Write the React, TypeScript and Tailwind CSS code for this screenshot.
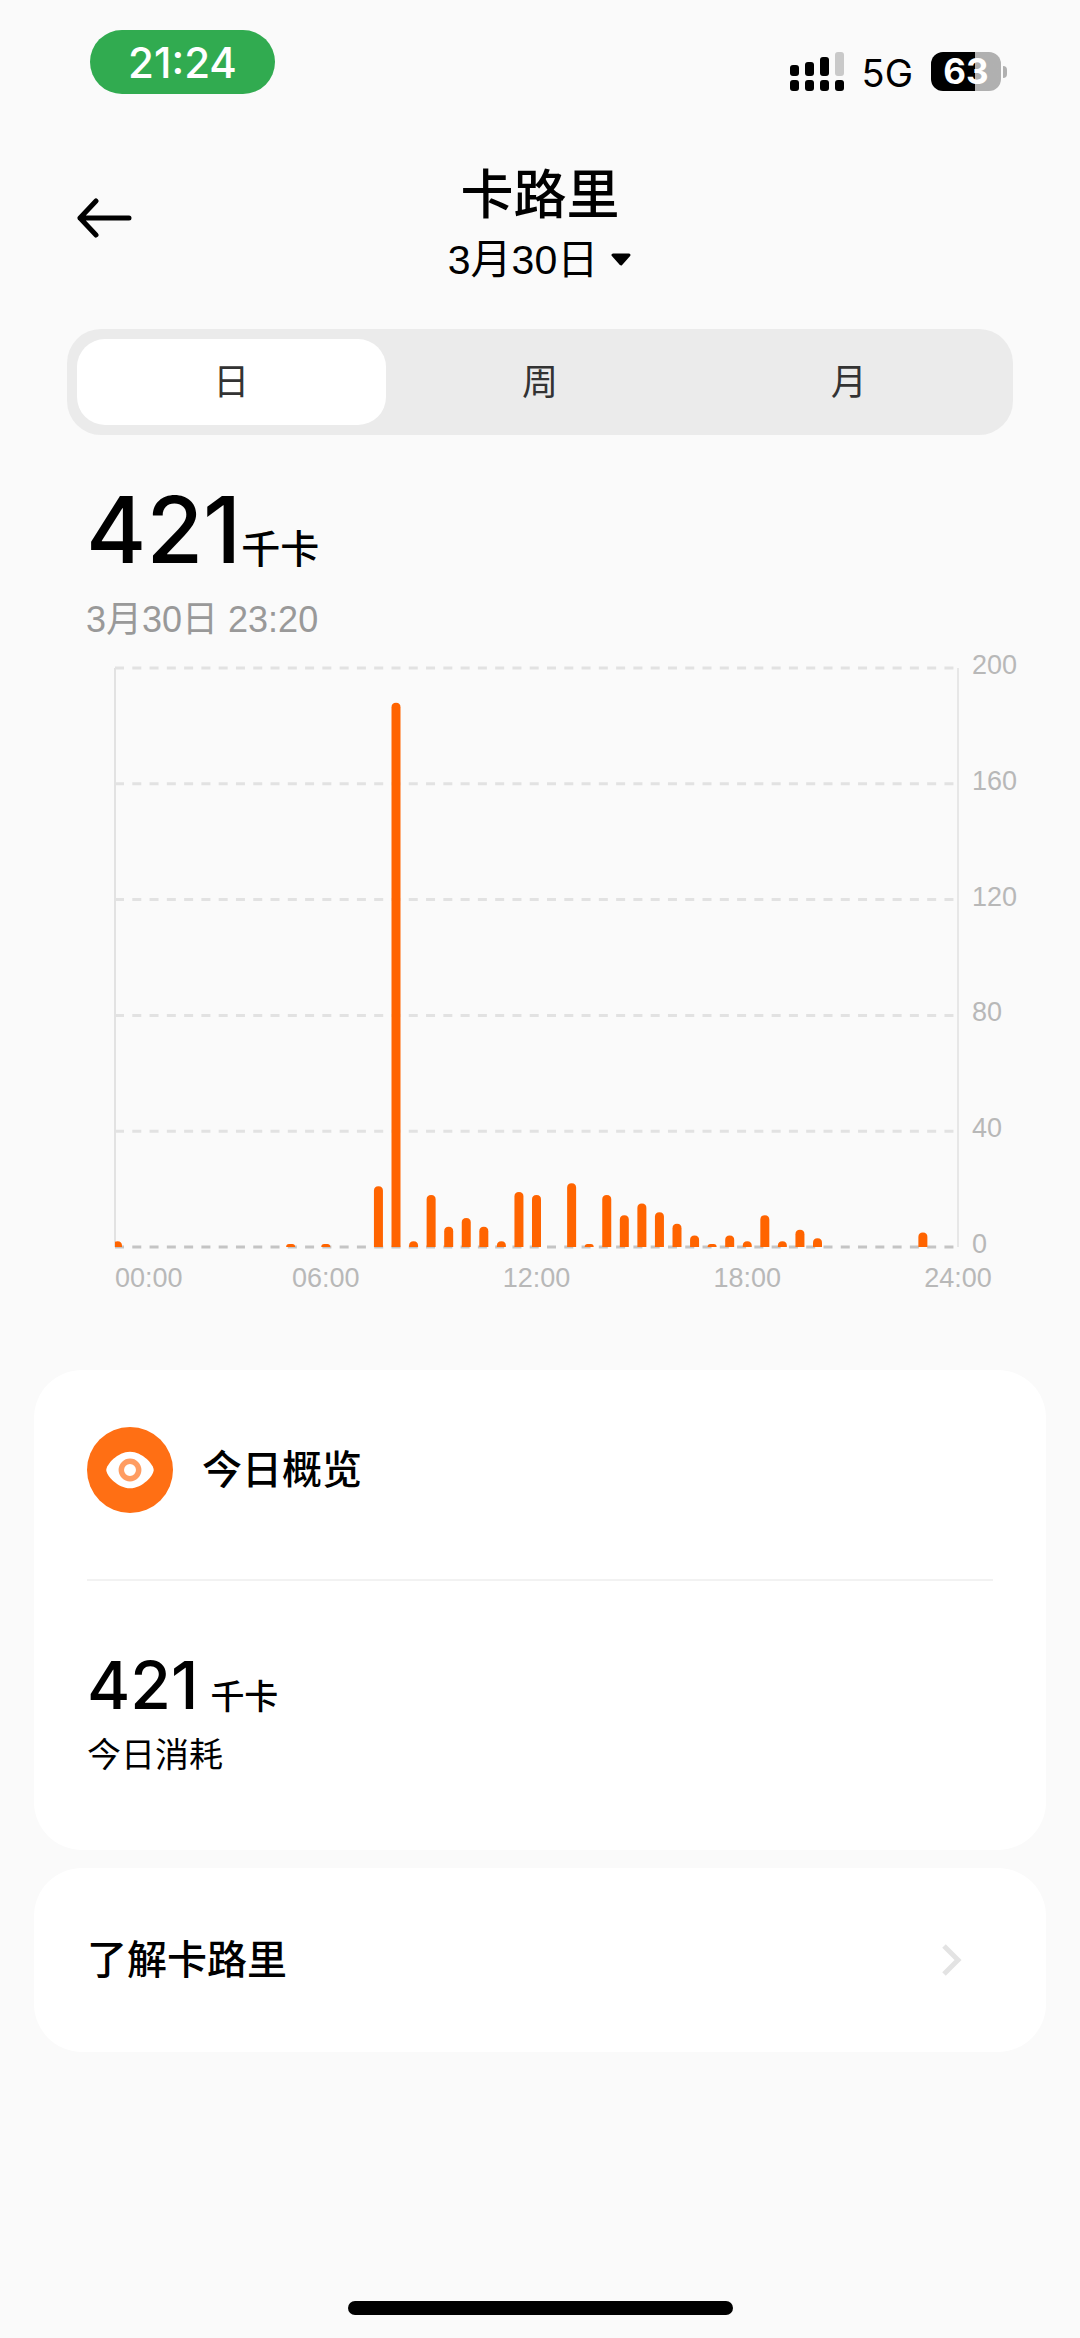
import { useState } from 'react';

const FONT = "font-['Inter','Noto_Sans_CJK_SC',sans-serif]";
const DATE_FONT = "font-['Liberation_Sans','Noto_Sans_CJK_SC',sans-serif]";

const TABS = ['日', '周', '月'];

// kcal per half hour, keyed by slot index (0 = 00:00, 47 = 23:30)
const SLOTS: [number, number][] = [
  [0, 2], [10, 1], [12, 1], [15, 21], [16, 188], [17, 2], [18, 18], [19, 7],
  [20, 10], [21, 7], [22, 2], [23, 19], [24, 18], [26, 22], [27, 1], [28, 18],
  [29, 11], [30, 15], [31, 12], [32, 8], [33, 4], [34, 1], [35, 4], [36, 2],
  [37, 11], [38, 2], [39, 6], [40, 3], [46, 5],
];

const HOURS = [0, 6, 12, 18, 24];
const LEVELS = [0, 40, 80, 120, 160, 200];

const LEFT = 115;
const RIGHT = 958;
const TOP = 18;
const BOTTOM = 597;
const STEP = (RIGHT - LEFT) / 48;
const BAR = 9;

const levelY = (value: number) => BOTTOM - (value / 200) * (BOTTOM - TOP);

const barPath = (slot: number, value: number) => {
  // the midnight bar is pushed inside the axis
  const x = Math.max(LEFT + slot * STEP - BAR / 2, LEFT - 2);
  const y = levelY(value);
  const r = Math.min(BAR / 2, BOTTOM - y);
  return `M${x} ${BOTTOM}V${y + r}Q${x} ${y} ${x + r} ${y}H${x + BAR - r}Q${x + BAR} ${y} ${x + BAR} ${y + r}V${BOTTOM}Z`;
};

const StatusBar = () => (
  <div className="flex items-start justify-between pt-[30px] pr-[73px] pl-[90px]">
    <div className="flex h-16 w-[185px] items-center justify-center rounded-full bg-[#31ab50] text-[42px] font-medium text-white">
      21:24
    </div>
    <div className="flex items-center gap-[18px] pt-[22px]">
      <svg width="54" height="39" viewBox="0 0 54 39" aria-hidden="true">
        <rect x="0" y="13" width="9" height="11" rx="3" />
        <rect x="15" y="10" width="9" height="14" rx="3" />
        <rect x="30" y="5" width="9" height="19" rx="3" />
        <rect x="45" y="0" width="9" height="24" rx="3" fill="#c9c9c9" />
        <rect x="0" y="28" width="9" height="11" rx="3" />
        <rect x="15" y="28" width="9" height="11" rx="3" />
        <rect x="30" y="28" width="9" height="11" rx="3" />
        <rect x="45" y="28" width="9" height="11" rx="3" />
      </svg>
      <span className="pt-[3px] text-[38px] leading-9">5G</span>
      <div className="flex items-center gap-0.5">
        <div className="flex h-[39px] w-[70px] items-center justify-center rounded-xl bg-linear-to-r from-black from-63% to-[#b0b0b0] to-63% text-[35px] font-bold text-white">
          63
        </div>
        <div className="h-3 w-1 rounded-r-full bg-[#b0b0b0]" />
      </div>
    </div>
  </div>
);

const Header = () => (
  <header className="grid grid-cols-[1fr_auto_1fr] items-start px-[76px] pt-[66px]">
    <button type="button" aria-label="返回" className="mt-[38px] justify-self-start">
      <svg width="56" height="40" viewBox="0 0 56 40" fill="none" stroke="#000" strokeWidth="5" strokeLinecap="round" strokeLinejoin="round">
        <path d="M53 20H4M20 3L4 20l16 17" />
      </svg>
    </button>
    <div className="flex flex-col items-center">
      <h1 className="text-[53px] leading-[70px] font-medium">卡路里</h1>
      <button type="button" className={`flex items-center gap-3 text-[41px] leading-[60px] ${DATE_FONT}`}>
        3月30日
        <svg width="22" height="14" viewBox="0 0 22 14" aria-hidden="true">
          <path d="M3 2h16l-8 9z" stroke="#000" strokeWidth="3" strokeLinejoin="round" />
        </svg>
      </button>
    </div>
  </header>
);

const Chart = () => (
  <svg
    viewBox="0 0 1080 650"
    className="mt-1 block h-auto w-full font-['Liberation_Sans',sans-serif]"
    role="img"
    aria-label="卡路里"
  >
    <clipPath id="plot">
      <rect x={LEFT} y="0" width={RIGHT - LEFT} height={BOTTOM} />
    </clipPath>
    <path d={`M${LEFT} ${TOP}V${BOTTOM}`} stroke="#e2e2e2" strokeWidth="2" />
    <path d={`M${RIGHT} ${TOP}V${BOTTOM}`} stroke="#d4d4d4" />
    {LEVELS.map((level) => (
      <g key={level}>
        <path
          d={`M${LEFT} ${levelY(level)}H${RIGHT - 3}`}
          stroke={level === 0 ? '#c4c4c4' : '#e2e2e2'}
          strokeWidth="3"
          strokeDasharray="9 8.28"
        />
        <text x="972" y={levelY(level) + 6} fontSize="27" fill="#b8b8b8">
          {level}
        </text>
      </g>
    ))}
    <g clipPath="url(#plot)" fill="#ff6400">
      {SLOTS.map(([slot, value]) => (
        <path key={slot} d={barPath(slot, value)} />
      ))}
    </g>
    {HOURS.map((hour) => (
      <text
        key={hour}
        x={LEFT + hour * 2 * STEP}
        y="637"
        fontSize="27"
        fill="#b8b8b8"
        textAnchor={hour === 0 ? 'start' : 'middle'}
      >
        {`${String(hour).padStart(2, '0')}:00`}
      </text>
    ))}
  </svg>
);

export default function App() {
  const [tab, setTab] = useState('日');

  return (
    <div className={`flex min-h-screen flex-col bg-[#fafafa] text-black ${FONT}`}>
      <StatusBar />
      <Header />

      <nav className="mx-[67px] mt-[39px] grid grid-cols-3 rounded-[34px] bg-[#ebebeb] p-[10px]">
        {TABS.map((name) => (
          <button
            key={name}
            type="button"
            aria-pressed={tab === name}
            onClick={() => setTab(name)}
            className={`h-[86px] rounded-[28px] text-[36px] text-[#333] ${tab === name ? 'bg-white' : ''}`}
          >
            {name}
          </button>
        ))}
      </nav>

      <section className="pt-[39px]">
        <div className="px-[86px]">
          <div className="flex items-baseline font-medium">
            <span className="text-[92px] leading-[112px]">421</span>
            <span className="text-[39px] leading-none">千卡</span>
          </div>
          <div className={`mt-2 text-[36px] leading-[52px] text-[#999] ${DATE_FONT}`}>3月30日 23:20</div>
        </div>
        <Chart />
      </section>

      <main className="mt-[70px] flex flex-col gap-[18px] px-[34px]">
        <section className="rounded-[48px] bg-white px-[53px] pt-[57px] pb-[69px]">
          <div className="flex items-center gap-[29px] border-b-2 border-[#f2f2f2] pb-[66px]">
            <svg width="86" height="86" viewBox="0 0 87 87" aria-hidden="true">
              <circle cx="43.5" cy="43.5" r="43.5" fill="#ff6f14" />
              <path d="M19.500 43.500C19.500 38 31 25 43.500 25S67.500 38 67.500 43.500S56 62 43.500 62S19.500 49 19.500 43.500Z" fill="#fff" />
              <circle cx="43.5" cy="43.5" r="8.8" fill="none" stroke="#ff9c61" strokeWidth="5.5" />
            </svg>
            <h2 className="text-[40px] leading-[60px] font-medium">今日概览</h2>
          </div>
          <div className="flex items-baseline gap-3 pt-[62px] font-medium">
            <span className="text-[66px] leading-[84px]">421</span>
            <span className="text-[34px] leading-none">千卡</span>
          </div>
          <div className="mt-[2px] text-[34px] leading-[52px]">今日消耗</div>
        </section>

        <a href="#about" className="flex h-[184px] items-center justify-between rounded-[48px] bg-white pr-[83px] pl-[53px]">
          <span className="text-[40px] leading-[60px] font-medium">了解卡路里</span>
          <svg width="22" height="34" viewBox="0 0 22 34" fill="none" stroke="#e3e3e3" strokeWidth="5" aria-hidden="true">
            <path d="M3 3l14 14L3 31" />
          </svg>
        </a>
      </main>

      <div className="mx-auto mt-auto mb-[23px] h-[14px] w-[385px] rounded-full bg-black" />
    </div>
  );
}
